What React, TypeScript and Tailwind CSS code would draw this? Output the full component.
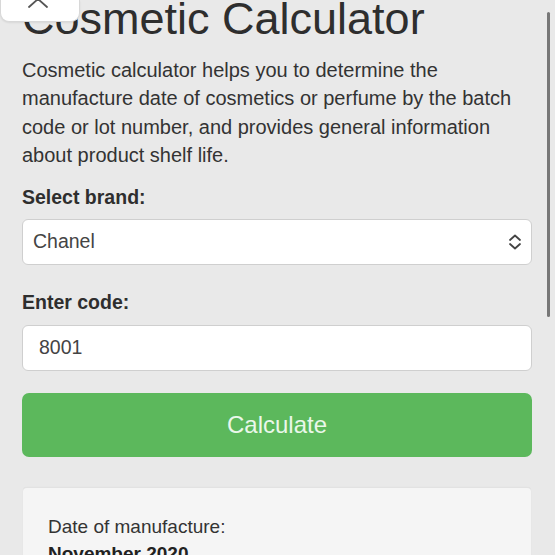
import React from "react";

export default function App() {
  return (
    <div
      className="relative w-[555px] h-[555px] overflow-hidden bg-[#e9e9e9] text-[#333]"
      style={{ fontFamily: '"Liberation Sans", Arial, sans-serif' }}
    >
      <div className="px-[22px] pr-[23px]">
        <h1 className="mt-[-4px] text-[45px] leading-[45px] font-normal text-[#2e2e2e] whitespace-nowrap">
          Cosmetic Calculator
        </h1>
        <p className="mt-[14.5px] text-[20px] leading-[28.5px] text-[#333]">
          Cosmetic calculator helps you to determine the manufacture date of cosmetics or perfume by the batch code or lot number, and provides general information about product shelf life.
        </p>
        <div className="mt-[13.5px] text-[19.5px] leading-[28px] font-bold text-[#2e2e2e]">Select brand:</div>
        <div className="mt-[8px] h-[46px] rounded-[6px] border border-[#cfcfcf] bg-white flex items-center justify-between pl-[10px] pr-[9px]">
          <span className="text-[19.5px] text-[#444]">Chanel</span>
          <svg width="14" height="16" viewBox="0 0 14 16" fill="none" stroke="#444" strokeWidth="1.8" strokeLinecap="round" strokeLinejoin="round">
            <path d="M2 6 L7 1.5 L12 6" />
            <path d="M2 10 L7 14.5 L12 10" />
          </svg>
        </div>
        <div className="mt-[23px] text-[19.5px] leading-[28px] font-bold text-[#2e2e2e]">Enter code:</div>
        <div className="mt-[8.5px] h-[46px] rounded-[6px] border border-[#cfcfcf] bg-white flex items-center pl-[16px]">
          <span className="text-[19.5px] text-[#444]">8001</span>
        </div>
        <button className="mt-[22px] w-full h-[64px] rounded-[7px] bg-[#5cb85c] text-[#eaf7ea] text-[24px] flex items-center justify-center">
          Calculate
        </button>
        <div className="mt-[30px] mx-[1px] rounded-[4px] bg-[#f5f5f5] border-t border-[#e2e2e2] shadow-[0_0_1px_rgba(0,0,0,0.08)] pt-[25px] px-[25px] pb-[20px]">
          <div className="text-[19px] leading-[28px] text-[#333]">Date of manufacture:</div>
          <div className="text-[19px] leading-[26px] font-bold text-[#222]">November 2020</div>
        </div>
      </div>

      <div className="absolute left-0 top-0 w-[80px] h-[22px] bg-white rounded-b-[9px] border border-t-0 border-[#d8d8d8] shadow-[0_1px_2px_rgba(0,0,0,0.08)] flex justify-center">
        <svg width="22" height="12" viewBox="0 0 22 12" fill="none" stroke="#555" strokeWidth="1.8" strokeLinecap="round" strokeLinejoin="round" className="-mt-[3px] -ml-[4px]">
          <path d="M2 10 L11 2 L20 10" />
        </svg>
      </div>

      <div className="absolute left-[547px] top-[12px] w-[3px] h-[305px] rounded-full bg-[#777]" />
    </div>
  );
}
